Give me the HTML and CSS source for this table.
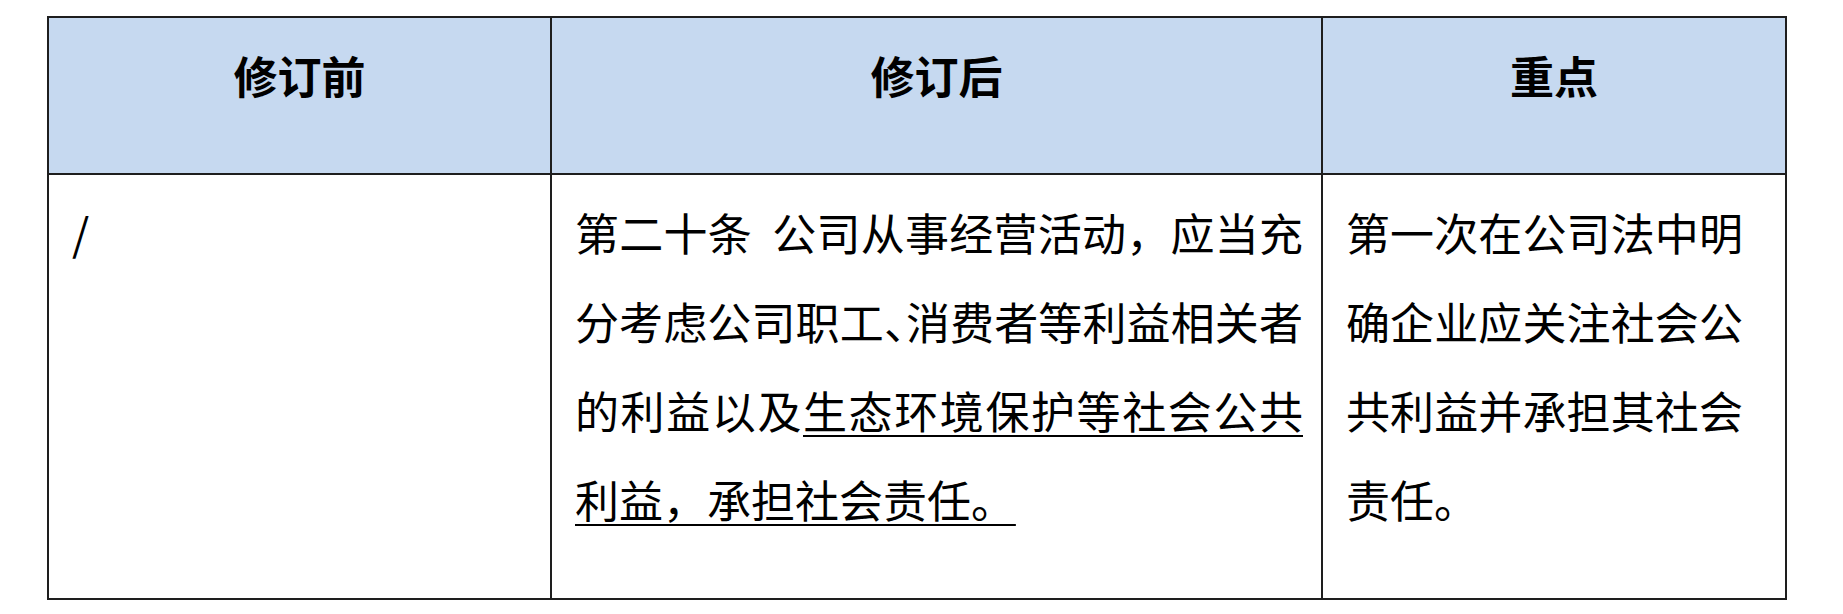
FILE: index.html
```html
<!DOCTYPE html>
<html lang="zh-CN">
<head>
<meta charset="utf-8">
<link rel="stylesheet" href="styles.css">
</head>
<body>
<table class="cmp">
  <colgroup>
    <col class="c1">
    <col class="c2">
    <col class="c3">
  </colgroup>
  <thead>
    <tr>
      <th>修订前</th>
      <th>修订后</th>
      <th>重点</th>
    </tr>
  </thead>
  <tbody>
    <tr>
      <td class="slash">/</td>
      <td class="mid">第二十条&nbsp;&nbsp;公司从事经营活动，应当充分考虑公司职工<span class="halt">、</span>消费者等利益相关者的利益以及<span class="ul">生态环境保护等社会公共利益，承担社会责任。<span class="tail">&nbsp;</span></span></td>
      <td class="right">第一次在公司法中明确企业应关注社会公共利益并承担其社会责任。</td>
    </tr>
  </tbody>
</table>
</body>
</html>
```

FILE: styles.css
```css
html, body {
  margin: 0;
  padding: 0;
  background: #ffffff;
}

body {
  padding: 16px 0 0 47px;
  font-family: "Noto Sans CJK SC", "Noto Sans", sans-serif;
  color: #000;
}

.cmp {
  border-collapse: collapse;
  table-layout: fixed;
  width: 1738px;
}

.c1 { width: 503px; }
.c2 { width: 771px; }
.c3 { width: 464px; }

.cmp th,
.cmp td {
  border: 2px solid #1e1e1e;
  vertical-align: top;
}

.cmp th {
  background: #c6d9f0;
  height: 157px;
  box-sizing: border-box;
  padding: 27px 0 0 0;
  font-size: 44px;
  line-height: 60px;
  font-weight: 700;
  text-align: center;
}

.cmp td {
  height: 425px;
  box-sizing: border-box;
  padding: 13px 18px 0 23px;
  font-size: 44px;
  line-height: 89px;
  text-align: justify;
}

.slash {
  font-weight: 400;
}

.cmp td.right {
  padding-right: 42px;
}

.halt {
  font-feature-settings: "halt" 1;
}

.ul {
  text-decoration: underline;
  text-decoration-thickness: 2px;
  text-underline-offset: 6px;
}

.tail {
  word-spacing: -9px;
}
```
